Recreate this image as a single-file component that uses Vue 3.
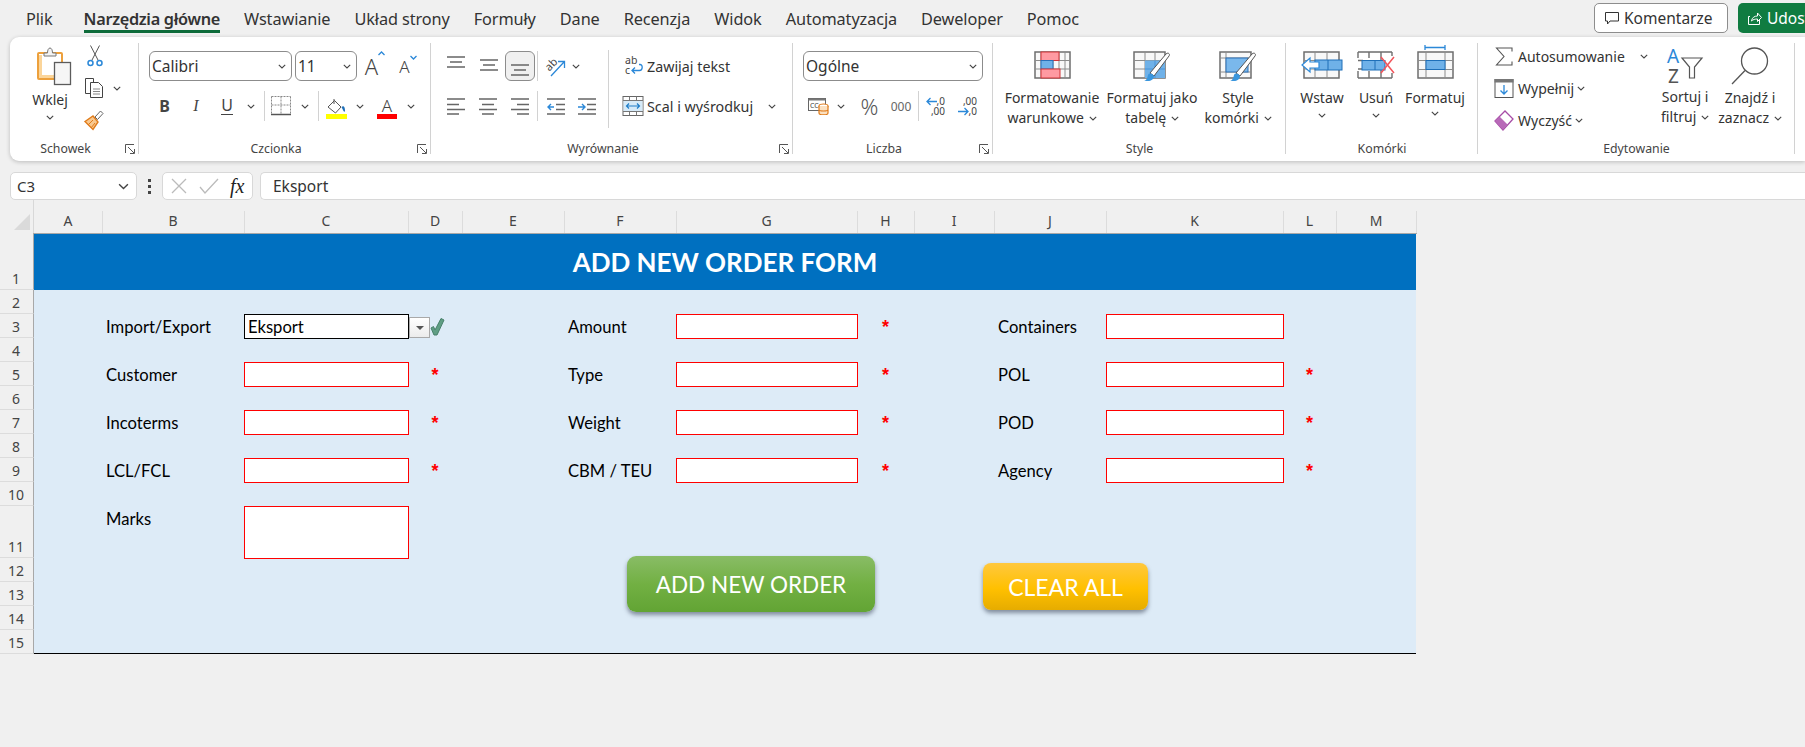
<template>
  <div class="app">
    <svg class="sprite" width="0" height="0">
      <symbol id="chev" viewBox="0 0 8 5"><path d="M.8 .8 4 4 7.2 .8" fill="none" stroke="#444" stroke-width="1.1" /></symbol>
      <symbol id="launch" viewBox="0 0 10 10"><path d="M.5 9V.5H9M3 3l6 6M9.5 5v4.500H5" fill="none" stroke="#555" stroke-width="1" /></symbol>
    </svg>

    <header class="tabs">
      <nav class="tab-list">
        <span v-for="t in tabs" :key="t" class="tab" :class="{ active: t === 'Narzędzia główne' }">{{ t }}</span>
      </nav>
      <div class="tab-actions">
        <button class="comment-btn">
          <svg width="16" height="16" viewBox="0 0 16 16"><path d="M1.500 2.500h13v8.500H6L3.500 14v-3h-2z" fill="none" stroke="#333" /></svg>
          Komentarze
        </button>
        <button class="share-btn">
          <svg width="16" height="16" viewBox="0 0 16 16"><path d="M3 6.500H1.500v8h11V10M4.500 11c.5-3.500 3-5 6-5V3l4 4.500-4 4V9c-2.500 0-4.500.5-6 2z" fill="none" stroke="#fff" /></svg>
          Udostępnij
        </button>
      </div>
    </header>

    <section class="ribbon">
      <!-- Schowek -->
      <div class="group g-clip">
        <div class="body">
          <div class="big paste">
            <svg width="35" height="38" viewBox="0 0 35 38">
              <rect x="1" y="6" width="24" height="26" rx="1" fill="#fff" stroke="#eda03c" stroke-width="2" />
              <path d="M2 28h16v3H2zM2 8h3v20H2z" fill="#fbd59a" />
              <path d="M7 9V6h3.500C10.500 3 11.500 1 13 1s2.500 2 2.500 5H19v3z" fill="#f4f4f4" stroke="#777" />
              <rect x="17.500" y="15.500" width="16" height="22" fill="#f6f6f6" stroke="#5c5c5c" stroke-width="1.300" />
            </svg>
            <span class="lbl">Wklej</span>
            <svg class="chev"><use href="#chev" /></svg>
          </div>
          <div class="clip-col">
            <svg class="clip-icon" width="16" height="22" viewBox="0 0 16 22">
              <path d="M3.500 .5 11 15M12.500 .5 5 15" stroke="#555" fill="none" />
              <circle cx="3.500" cy="18" r="2.500" fill="none" stroke="#2b88d8" stroke-width="1.500" />
              <circle cx="12.500" cy="18" r="2.500" fill="none" stroke="#2b88d8" stroke-width="1.500" />
            </svg>
            <div class="clip-row">
              <svg width="20" height="20" viewBox="0 0 20 20">
                <path d="M6.500 15.500h-5V.5h8V5" fill="#fff" stroke="#444" />
                <path d="M6.500 4.500h8l4 4v11h-12z" fill="#fff" stroke="#444" />
                <path d="M9 11h7M9 13.500h7M9 16h7" stroke="#888" />
              </svg>
              <svg class="chev"><use href="#chev" /></svg>
            </div>
            <svg class="clip-icon" width="20" height="20" viewBox="0 0 20 20">
              <path d="M1 11.500 9 6l5 6-5 7.500z" fill="#f9c88e" stroke="#e07b1a" stroke-width="1.400" />
              <path d="M4 15l5-5M7 18l4-5" stroke="#e07b1a" />
              <path d="M11 7l5.500-6 2.500 2.500-5.500 6z" fill="#fff" stroke="#666" />
            </svg>
          </div>
        </div>
        <div class="g-label has-launch">Schowek</div>
        <svg class="launcher"><use href="#launch" /></svg>
      </div>

      <!-- Czcionka -->
      <div class="group g-font">
        <div class="body rows">
          <div class="row font-top">
            <div class="select font-name">Calibri<svg class="chev"><use href="#chev" /></svg></div>
            <div class="select font-size">11<svg class="chev"><use href="#chev" /></svg></div>
            <span class="size-a big-a">A<svg width="7" height="5" viewBox="0 0 7 5"><path d="M.5 4 3.500 1 6.500 4" fill="none" stroke="#2b88d8" stroke-width="1.300" /></svg></span>
            <span class="size-a small-a">A<svg width="7" height="5" viewBox="0 0 7 5"><path d="M.5 1 3.500 4 6.500 1" fill="none" stroke="#2b88d8" stroke-width="1.300" /></svg></span>
          </div>
          <div class="row font-bot">
            <b class="fmt">B</b>
            <i class="fmt serif-i">I</i>
            <span class="fmt under">U</span>
            <svg class="chev"><use href="#chev" /></svg>
            <span class="vsep"></span>
            <svg width="20" height="20" viewBox="0 0 20 20">
              <path d="M.5 .5h19M.5 .5v17M19.500 .5v17M10 .5v17M.5 9h19" stroke="#888" stroke-dasharray="2 1" fill="none" />
              <path d="M0 18.500h20" stroke="#555" stroke-width="1.500" />
            </svg>
            <svg class="chev"><use href="#chev" /></svg>
            <span class="vsep"></span>
            <svg class="fill-svg" width="21" height="22" viewBox="0 0 21 22">
              <path d="M2 9 8.500 2.500 15 9l-5.500 6z" fill="#fff" stroke="#555" />
              <path d="M8 1v5" stroke="#555" />
              <path d="M15.500 9c2-2 3.500-.5 3.500 4 0 1-1 1-1.500 0z" fill="#1e6fb8" />
              <rect x="0" y="16" width="21" height="5" fill="#ff0" />
            </svg>
            <svg class="chev"><use href="#chev" /></svg>
            <span class="color-a">A</span>
            <svg class="chev"><use href="#chev" /></svg>
          </div>
        </div>
        <div class="g-label has-launch">Czcionka</div>
        <svg class="launcher"><use href="#launch" /></svg>
      </div>

      <!-- Wyrównanie -->
      <div class="group g-align">
        <div class="body align-body">
          <div class="rows align-left">
            <div class="row al-top">
              <svg class="al" viewBox="0 0 18 24"><path d="M0 3h18M3 8h12M0 13h18" /></svg>
              <svg class="al" viewBox="0 0 18 24"><path d="M0 6h18M3 11h12M0 16h18" /></svg>
              <span class="al-active"><svg class="al" viewBox="0 0 18 24"><path d="M0 11h18M3 16h12M0 21h18" /></svg></span>
              <span class="vsep"></span>
              <svg class="open-svg" width="21" height="21" viewBox="0 0 21 21">
                <text x="1" y="12" transform="rotate(-45 7 10)" font-size="11" fill="#444" font-family="Noto Sans, sans-serif">ab</text>
                <path d="M6 20 19 6M13 5.500h6.500V12" fill="none" stroke="#2b88d8" stroke-width="1.300" />
              </svg>
              <svg class="chev"><use href="#chev" /></svg>
            </div>
            <div class="row al-bot">
              <svg class="al" viewBox="0 0 18 18"><path d="M0 2h18M0 7.500h12M0 12.500h18M0 17h12" /></svg>
              <svg class="al" viewBox="0 0 18 18"><path d="M0 2h18M3 7.500h12M0 12.500h18M3 17h12" /></svg>
              <svg class="al" viewBox="0 0 18 18"><path d="M0 2h18M6 7.500h12M0 12.500h18M6 17h12" /></svg>
              <span class="vsep"></span>
              <svg class="al" viewBox="0 0 18 18">
                <path d="M0 2h18M9 7.500h9M9 12.500h9M0 17h18" />
                <path d="M7 10H1M4 7l-3 3 3 3" style="stroke:#2b88d8" />
              </svg>
              <svg class="al" viewBox="0 0 18 18">
                <path d="M0 2h18M9 7.500h9M9 12.500h9M0 17h18" />
                <path d="M0 10h6M4 7l3 3-3 3" style="stroke:#2b88d8" />
              </svg>
            </div>
          </div>
          <div class="rows align-right">
            <div class="row wide-row">
              <svg class="wide-icon" width="20" height="22" viewBox="0 0 20 22">
                <text x="2" y="9" font-size="10.500" fill="#444" font-family="Noto Sans, sans-serif">ab</text>
                <text x="2" y="19" font-size="10.500" fill="#444" font-family="Noto Sans, sans-serif">c</text>
                <path d="M16 9.500h1c3 0 3 6-.5 6H9M12 12.500l-3 3 3 3" fill="none" stroke="#2b88d8" stroke-width="1.300" />
              </svg>
              <span>Zawijaj tekst</span>
            </div>
            <div class="row wide-row">
              <svg class="wide-icon" width="21" height="20" viewBox="0 0 21 20">
                <rect x=".5" y=".5" width="20" height="19" fill="#fff" stroke="#666" />
                <path d="M.5 4.500h20M.5 15.500h20M7 .5v4M14 .5v4M7 15.500v4M14 15.500v4" stroke="#777" />
                <rect x="1" y="5" width="19" height="10" fill="#d6eaf8" />
                <path d="M4 10h13M6.500 7.500 4 10l2.500 2.500M14.500 7.500 17 10l-2.500 2.500" fill="none" stroke="#1e7dc8" stroke-width="1.200" />
              </svg>
              <span>Scal i wyśrodkuj</span>
              <svg class="chev merge-chev"><use href="#chev" /></svg>
            </div>
          </div>
        </div>
        <div class="g-label has-launch">Wyrównanie</div>
        <svg class="launcher"><use href="#launch" /></svg>
      </div>

      <!-- Liczba -->
      <div class="group g-num">
        <div class="body rows">
          <div class="row"><div class="select num-format">Ogólne<svg class="chev"><use href="#chev" /></svg></div></div>
          <div class="row num-bot">
            <svg width="21" height="17" viewBox="0 0 21 17">
              <rect x=".5" y=".5" width="17" height="12" fill="#fff" stroke="#666" />
              <path d="M.5 .5h17v2H.5z" fill="#777" />
              <text x="2" y="10" font-size="7" fill="#444" font-family="Noto Sans, sans-serif">CC</text>
              <ellipse cx="15.500" cy="8" rx="4.500" ry="2" fill="#fff" stroke="#e07b1a" stroke-width="1.200" />
              <path d="M11 8v7c0 2.500 9 2.500 9 0V8M11 11.500c0 2 9 2 9 0" fill="#fbe0c0" stroke="#e07b1a" stroke-width="1.200" />
            </svg>
            <svg class="chev"><use href="#chev" /></svg>
            <span class="pct">%</span>
            <span class="thou">000</span>
            <span class="vsep"></span>
            <div class="dec">
              <span class="dec-a"><svg width="11" height="9" viewBox="0 0 11 9"><path d="M11 4.500H1M4.500 1 1 4.500 4.500 8" fill="none" stroke="#2b88d8" stroke-width="1.300" /></svg><em>,0</em></span>
              <span class="dec-b">,00</span>
            </div>
            <div class="dec">
              <span class="dec-c">,00</span>
              <span class="dec-a"><svg width="11" height="9" viewBox="0 0 11 9"><path d="M0 4.500h10M6.500 1 10 4.500 6.500 8" fill="none" stroke="#2b88d8" stroke-width="1.300" /></svg><em>,0</em></span>
            </div>
          </div>
        </div>
        <div class="g-label has-launch">Liczba</div>
        <svg class="launcher"><use href="#launch" /></svg>
      </div>

      <!-- Style -->
      <div class="group g-style">
        <div class="body">
          <div class="big tall w118">
            <svg width="37" height="28" viewBox="0 0 37 28">
              <path d="M1 1h35v26H1z" fill="#f8f8f8" stroke="#6e6e6e" stroke-width="1.500" />
              <path d="M7 1v26M19 1v26M25 1v26M31 1v26M1 9.500h35M1 18h35" stroke="#8c8c8c" />
              <rect x="7" y="1" width="18" height="8.500" fill="#ff9aa2" stroke="#d13438" />
              <rect x="7" y="9.500" width="12" height="8.500" fill="#6fb1e8" stroke="#2a70b8" />
              <rect x="7" y="18" width="19" height="9" fill="#ff9aa2" stroke="#d13438" />
            </svg>
            <span class="lbl">Formatowanie</span>
            <span class="lbl">warunkowe <svg class="chev"><use href="#chev" /></svg></span>
          </div>
          <div class="big tall w82">
            <svg class="brush" width="38" height="31" viewBox="0 0 38 31">
              <path d="M1 1h31v26H1z" fill="#f8f8f8" stroke="#6e6e6e" stroke-width="1.500" />
              <path d="M12 1v26M22 1v26M1 9.500h31M1 18h31" stroke="#8c8c8c" />
              <rect x="12" y="9.500" width="20" height="17.500" fill="#6fb1e8" />
              <path d="M22 9.500v17.500M12 18h20" stroke="#4a93d8" />
              <path d="M17 22 33 3c2-2 4.500 0 3 2L21 25z" fill="#fff" stroke="#555" />
              <path d="M10 30c3 0 4-2 5-6 1-2 4-2 6 1 0 3-3 5-6 5z" fill="#3a96dd" />
            </svg>
            <span class="lbl">Formatuj jako</span>
            <span class="lbl">tabelę <svg class="chev"><use href="#chev" /></svg></span>
          </div>
          <div class="big tall w90">
            <svg class="brush" width="38" height="31" viewBox="0 0 38 31">
              <path d="M1 1h31v26H1z" fill="#f8f8f8" stroke="#6e6e6e" stroke-width="1.500" />
              <path d="M7 1v26M1 7h31M1 21h31" stroke="#8c8c8c" />
              <rect x="7" y="7" width="22" height="14" fill="#7ab8ec" stroke="#2a70b8" />
              <path d="M17 22 33 3c2-2 4.500 0 3 2L21 25z" fill="#fff" stroke="#555" />
              <path d="M10 30c3 0 4-2 5-6 1-2 4-2 6 1 0 3-3 5-6 5z" fill="#3a96dd" />
            </svg>
            <span class="lbl">Style</span>
            <span class="lbl">komórki <svg class="chev"><use href="#chev" /></svg></span>
          </div>
        </div>
        <div class="g-label">Style</div>
      </div>

      <!-- Komórki -->
      <div class="group g-cells">
        <div class="body">
          <div class="big tall w72">
            <svg width="42" height="28" viewBox="0 0 42 28">
              <path d="M3 1h35v26H3z" fill="#f8f8f8" stroke="#6e6e6e" stroke-width="1.500" />
              <path d="M14 1v26M26 1v26M3 9.500h35M3 18h35" stroke="#8c8c8c" />
              <rect x="14" y="9" width="27" height="10" fill="#6fb1e8" stroke="#1e6fb8" />
              <path d="M27 9v10" stroke="#1e6fb8" />
              <path d="M1 14 9 7v4h9v6H9v4z" fill="#fff" stroke="#2b88d8" stroke-width="1.200" />
            </svg>
            <span class="lbl low">Wstaw</span>
            <svg class="chev cell-chev"><use href="#chev" /></svg>
          </div>
          <div class="big tall w36">
            <svg width="38" height="28" viewBox="0 0 38 28">
              <path d="M1 1h34M1 27h34M1 1v6M1 20v7M12 1v6M12 20v7M24 1v26M35 1v4M35 22v5M1 9.500h5M1 18h5" fill="none" stroke="#6e6e6e" stroke-width="1.400" />
              <rect x="5" y="9.500" width="23" height="9.500" fill="#6fb1e8" stroke="#1e6fb8" />
              <path d="M18 9.500V19" stroke="#1e6fb8" />
              <path d="M24 6l13 16M37 6 24 22" stroke="#f2545b" stroke-width="1.500" />
            </svg>
            <span class="lbl low">Usuń</span>
            <svg class="chev cell-chev"><use href="#chev" /></svg>
          </div>
          <div class="big tall w82 fmt-cell">
            <svg width="37" height="34" viewBox="0 0 37 34">
              <path d="M8 2.500h20M8 0v5M28 0v5" stroke="#2b88d8" stroke-width="1.300" fill="none" />
              <path d="M1 7h35v26H1z" fill="#f8f8f8" stroke="#6e6e6e" stroke-width="1.500" />
              <path d="M9 7v26M28 7v26M1 15.500h35M1 24.500h35" stroke="#8c8c8c" />
              <rect x="9" y="15.500" width="19" height="9" fill="#6fb1e8" stroke="#1e6fb8" />
            </svg>
            <span class="lbl">Formatuj</span>
            <svg class="chev fmt-chev"><use href="#chev" /></svg>
          </div>
        </div>
        <div class="g-label">Komórki</div>
      </div>

      <!-- Edytowanie -->
      <div class="group g-edit">
        <div class="body">
          <div class="edit-list">
            <div class="edit-row">
              <svg width="18" height="19" viewBox="0 0 18 19"><path d="M17 4.500V1H1.500L9 9.500 1.500 18H17v-3.500" fill="none" stroke="#555" stroke-width="1.100" /></svg>
              <span>Autosumowanie</span>
              <svg class="chev sum-chev"><use href="#chev" /></svg>
            </div>
            <div class="edit-row">
              <svg width="19" height="19" viewBox="0 0 19 19">
                <rect x=".5" y=".5" width="18" height="18" fill="#fff" stroke="#555" />
                <path d="M0 0h19v3.500H0z" fill="#777" />
                <path d="M9.500 6v9M6 11.500l3.500 3.500 3.500-3.500" fill="none" stroke="#2b88d8" stroke-width="1.300" />
              </svg>
              <span>Wypełnij</span>
              <svg class="chev"><use href="#chev" /></svg>
            </div>
            <div class="edit-row">
              <svg width="20" height="21" viewBox="0 0 20 21">
                <path d="M1 11 11 1l8 8L9 20z" fill="#fff" stroke="#a64ca6" stroke-width="1.300" />
                <path d="M1 11l4.500-4.500 8 8L9 20z" fill="#b869b8" />
              </svg>
              <span>Wyczyść</span>
              <svg class="chev"><use href="#chev" /></svg>
            </div>
          </div>
          <div class="big w54 short">
            <svg width="38" height="37" viewBox="0 0 38 37">
              <text x="1" y="16" font-size="19" fill="#2b88d8" font-family="Noto Sans, sans-serif">A</text>
              <text x="2" y="36" font-size="19" fill="#555" font-family="Noto Sans, sans-serif">Z</text>
              <path d="M16 11h20l-7.500 9v11h-5V20z" fill="#fff" stroke="#555" stroke-width="1.200" />
            </svg>
            <span class="lbl">Sortuj i</span>
            <span class="lbl">filtruj <svg class="chev"><use href="#chev" /></svg></span>
          </div>
          <div class="big w76 short">
            <svg width="38" height="38" viewBox="0 0 38 38">
              <circle cx="23.500" cy="14" r="13" fill="#fff" stroke="#555" stroke-width="1.300" />
              <path d="M14 23.500 1 37" stroke="#555" stroke-width="1.300" />
            </svg>
            <span class="lbl">Znajdź i</span>
            <span class="lbl">zaznacz <svg class="chev"><use href="#chev" /></svg></span>
          </div>
        </div>
        <div class="g-label">Edytowanie</div>
      </div>
    </section>

    <section class="formula">
      <div class="name-box">C3<svg class="name-chev" viewBox="0 0 8 5"><path d="M.8 .8 4 4 7.200 .8" fill="none" stroke="#444" /></svg></div>
      <span class="dots"><i></i><i></i><i></i></span>
      <div class="fx-box">
        <svg width="16" height="16" viewBox="0 0 16 16"><path d="M1 1l14 14M15 1 1 15" stroke="#bbb" stroke-width="1.300" /></svg>
        <svg width="20" height="16" viewBox="0 0 20 16"><path d="M1 9l5 6L19 1" fill="none" stroke="#bbb" stroke-width="1.300" /></svg>
        <span class="fx">fx</span>
      </div>
      <div class="formula-input">Eksport</div>
    </section>

    <section class="sheet">
      <div class="corner"><span></span></div>
      <div v-for="c in colLetters" :key="c" class="col-head">{{ c }}</div>
      <div v-for="r in 15" :key="r" class="row-head" :style="{ gridRow: r + 1 }">{{ r }}</div>

      <div class="fill-area"></div>
      <div class="title-band">ADD NEW ORDER FORM</div>

      <template v-for="f in fields" :key="f.label">
        <div class="f-label" :style="{ gridColumn: f.col, gridRow: f.row + 1 }">{{ f.label }}</div>
        <div class="f-box" :class="{ selected: f.value }" :style="{ gridColumn: f.col + 1, gridRow: f.row + 1 }">{{ f.value }}</div>
        <div v-if="f.star" class="f-star" :style="{ gridColumn: f.col + 2, gridRow: f.row + 1 }">*</div>
      </template>

      <div class="f-drop">
        <span class="drop-btn"></span>
        <svg width="15" height="19" viewBox="0 0 15 19"><path d="M1 11l2.500-1.500L5 13 11 1.500l3 1.500-7 15H4z" fill="#5f9e84" stroke="#47806a" /></svg>
      </div>

      <button class="shape-btn add-btn">ADD NEW ORDER</button>
      <button class="shape-btn clear-btn">CLEAR ALL</button>
    </section>
  </div>
</template>

<script setup>
const tabs = ['Plik', 'Narzędzia główne', 'Wstawianie', 'Układ strony', 'Formuły', 'Dane', 'Recenzja', 'Widok', 'Automatyzacja', 'Deweloper', 'Pomoc']
const colLetters = 'ABCDEFGHIJKLM'.split('')

// col is the 1-based grid column of the label (the row header takes column 1)
const fields = [
  { label: 'Import/Export', col: 3, row: 3, value: 'Eksport' },
  { label: 'Customer', col: 3, row: 5, star: true },
  { label: 'Incoterms', col: 3, row: 7, star: true },
  { label: 'LCL/FCL', col: 3, row: 9, star: true },
  { label: 'Marks', col: 3, row: 11 },
  { label: 'Amount', col: 7, row: 3, star: true },
  { label: 'Type', col: 7, row: 5, star: true },
  { label: 'Weight', col: 7, row: 7, star: true },
  { label: 'CBM / TEU', col: 7, row: 9, star: true },
  { label: 'Containers', col: 11, row: 3 },
  { label: 'POL', col: 11, row: 5, star: true },
  { label: 'POD', col: 11, row: 7, star: true },
  { label: 'Agency', col: 11, row: 9, star: true }
]
</script>

<style>
html, body {
  margin: 0;
  height: 100%;
  overflow: hidden;
  background: #f0f0f0;
}
</style>

<style scoped>
.app {
  width: 1805px;
  height: 747px;
  overflow: hidden;
  background: #f0f0f0;
  font-family: "Noto Sans", sans-serif;
  color: #333;
}
.sprite { position: absolute; }
.chev { width: 8px; height: 5px; flex: none; }

/* tabs */
.tabs {
  height: 37px;
  display: flex;
  justify-content: space-between;
  box-sizing: border-box;
}
.tab-list { display: flex; gap: 24px; padding-left: 26px; }
.tab { height: 33px; line-height: 38px; font-size: 16.300px; letter-spacing: -.1px; white-space: nowrap; box-sizing: border-box; }
.tab:first-child { margin-right: 7px; }
.tab.active { font-weight: 600; border-bottom: 3px solid #0e6b3a; color: #333; letter-spacing: -.3px; }
.tab-actions { display: flex; gap: 10px; padding-top: 3px; width: 211px; flex: none; }
.comment-btn, .share-btn {
  height: 30px;
  border-radius: 5px;
  font: 15.500px "Noto Sans", sans-serif;
  display: flex;
  align-items: center;
  gap: 4px;
  padding: 0 0 0 9px;
  box-sizing: border-box;
  white-space: nowrap;
  flex: none;
}
.comment-btn { width: 134px; background: #fff; border: 1px solid #8d8d8d; color: #333; }
.share-btn { width: 120px; background: #107c41; border: 0; color: #fff; }

/* ribbon */
.ribbon {
  height: 124px;
  margin-left: 10px;
  display: flex;
  background: #fff;
  border-radius: 9px 0 0 9px;
  box-shadow: 0 1px 4px rgba(0, 0, 0, .22);
  font-size: 14px;
}
.group { position: relative; display: flex; flex-direction: column; flex: none; }
.group::after {
  content: "";
  position: absolute;
  right: 0;
  top: 6px;
  bottom: 7px;
  width: 1px;
  background: #d2d2d2;
}
.g-clip { width: 129px; }
.g-font { width: 292px; }
.g-align { width: 362px; }
.g-num { width: 200px; }
.g-style { width: 293px; }
.g-cells { width: 192px; }
.g-edit { width: 317px; }
.body { flex: 1; display: flex; min-height: 0; }
.g-label { height: 16px; line-height: 16px; margin-bottom: 4px; font-size: 12.300px; text-align: center; color: #444; }
.g-label.has-launch { padding-right: 18px; }
.launcher { position: absolute; right: 4px; bottom: 7px; width: 10px; height: 10px; }
.rows { display: flex; flex-direction: column; gap: 10px; padding-top: 14px; box-sizing: border-box; }
.row { height: 30px; display: flex; align-items: center; }
.vsep { width: 1px; height: 30px; background: #d2d2d2; justify-self: center; }
.select {
  height: 30px;
  box-sizing: border-box;
  border: 1px solid #8c8c8c;
  border-radius: 6px;
  display: flex;
  align-items: center;
  justify-content: space-between;
  padding: 0 5px 0 2px;
  font-size: 15.500px;
  color: #333;
}

.big { display: flex; flex-direction: column; align-items: center; flex: none; padding-top: 10px; box-sizing: border-box; }
.big.tall { padding-top: 14px; }
.lbl { height: 20px; line-height: 20px; white-space: nowrap; font-size: 14px; display: block; }
.big > svg:first-child { margin-bottom: 1px; flex: none; overflow: visible; }
.big > .lbl:nth-child(2) { margin-top: 4px; }
.big.tall > svg:first-child { margin-bottom: 5px; }
.big.tall > svg.brush { margin-bottom: 2px; }
.big.tall.fmt-cell > svg:first-child { margin-top: -6px; }
.big.short > svg:first-child { margin-bottom: -1px; }
.lbl .chev { margin-left: 1px; vertical-align: 2px; }
.w118 { width: 118px; }
.w82 { width: 82px; }
.w90 { width: 90px; }
.w72 { width: 72px; }
.w36 { width: 36px; }
.w54 { width: 54px; }
.w76 { width: 76px; }

/* schowek */
.paste { width: 80px; }
.big.paste > svg:first-child { margin-left: 9px; }
.paste .chev { margin-top: 5px; }
.clip-col { display: flex; flex-direction: column; align-items: flex-start; margin: 3px 0 0 -6px; }
.clip-row { height: 32px; display: flex; align-items: center; gap: 9px; }
.clip-icon { height: 22px; margin: 5px 0; }
.clip-col > .clip-icon:first-child { margin-left: 3px; }

/* czcionka */
.g-font .rows { padding-left: 10px; }
.font-name { width: 143px; margin-right: 3px; }
.font-size { width: 62px; }
.size-a { display: flex; align-items: flex-start; font-size: 19px; color: #444; justify-content: center; }
.big-a { width: 36px; font-size: 22px; font-weight: 300; }
.small-a { width: 30px; font-size: 17px; font-weight: 300; }
.font-bot {
  display: grid;
  grid-template-columns: 31px 32px 30px 18px 8px 26px 22px 4px 32px 16px 38px 10px;
  justify-items: center;
  align-items: center;
}
.fmt { font-size: 16px; color: #444; line-height: 20px; }
.serif-i { font-family: "Liberation Serif", serif; font-size: 16px; }
.under { border-bottom: 1px solid #444; line-height: 17px; }
.fill-svg { margin-top: 6px; }
.color-a {
  font-size: 17px;
  line-height: 16px;
  width: 20px;
  text-align: center;
  border-bottom: 5px solid #f00;
  margin-top: 4px;
  color: #444;
  font-weight: 300;
}

/* wyrownanie */
.align-body { display: flex; }
.align-left { width: 178px; padding-left: 9px; flex: none; position: relative; }
.align-left::after {
  content: "";
  position: absolute;
  right: 0;
  top: 13px;
  height: 78px;
  width: 1px;
  background: #d2d2d2;
}
.al { width: 18px; height: 24px; fill: none; stroke: #666; stroke-width: 1.400; }
.open-svg { overflow: visible; }
.al-top { display: grid; grid-template-columns: 32px 33px 30px 4px 32px 10px; justify-items: center; }
.al-bot { display: grid; grid-template-columns: 32px 32px 32px 2px 35px 28px; justify-items: center; }
.al-bot .al { height: 18px; }
.al-active {
  width: 30px;
  height: 30px;
  box-sizing: border-box;
  border: 1px solid #8c8c8c;
  border-radius: 6px;
  background: #f0f0f0;
  display: flex;
  align-items: center;
  justify-content: center;
}
.align-right { padding-left: 13px; }
.wide-row { font-size: 14.300px; white-space: nowrap; }
.wide-icon { width: 22px; margin-right: 3px; flex: none; overflow: visible; }
.merge-chev { margin-left: 15px; }

/* liczba */
.g-num .rows { padding-left: 10px; }
.num-format { width: 180px; }
.num-bot {
  display: grid;
  grid-template-columns: 31px 14px 43px 20px 14px 20px 12px 20px;
  justify-items: center;
}
.num-bot > .dec:last-child { grid-column: 8; }
.pct { font-size: 22px; color: #555; font-weight: 300; }
.thou { font-size: 12px; color: #666; }
.dec { display: flex; flex-direction: column; font-size: 10px; line-height: 10px; color: #444; align-items: flex-end; width: 20px; }
.dec-a { display: flex; align-items: center; }
.dec-a em { font-style: normal; }

/* komorki */
.low { margin-top: 2px; }
.cell-chev { margin-top: 5px; }
.fmt-chev { margin-top: 3px; }

/* edytowanie */
.edit-list { width: 180px; padding: 3px 0 0 15px; box-sizing: border-box; flex: none; }
.edit-row { height: 32px; display: flex; align-items: center; font-size: 14px; white-space: nowrap; }
.edit-row > svg:first-child { width: 22px; margin-right: 3px; flex: none; }
.edit-row .chev { margin-left: 3px; }
.edit-row .sum-chev { margin-left: 15px; }

/* formula bar */
.formula {
  height: 28px;
  margin-top: 11px;
  display: flex;
  align-items: stretch;
  font-size: 15px;
}
.name-box, .fx-box, .formula-input {
  background: #fff;
  border: 1px solid #d8d8d8;
  border-radius: 5px;
  box-sizing: border-box;
  display: flex;
  align-items: center;
}
.name-box { margin-left: 10px; width: 127px; padding: 0 7px 0 6px; justify-content: space-between; }
.name-chev { width: 11px; height: 7px; }
.dots { width: 25px; display: flex; flex-direction: column; align-items: center; justify-content: center; gap: 3px; }
.dots i { width: 3px; height: 3px; background: #444; display: block; }
.fx-box { width: 91px; padding-left: 8px; gap: 12px; }
.fx { font: italic 400 20px "Liberation Serif", serif; color: #222; margin-left: -1px; }
.formula-input { margin-left: 7px; flex: 1; padding-left: 12px; border-right: 0; border-radius: 5px 0 0 5px; font-size: 15.500px; }

/* sheet */
.sheet {
  position: relative;
  display: grid;
  grid-template-columns: 34px 68px 142px 164px 54px 102px 112px 181px 57px 80px 112px 177px 53px 80px;
  grid-template-rows: 33px 57px repeat(9, 24px) 52px repeat(4, 24px);
  font-family: Lato, sans-serif;
}
.corner { grid-column: 1; grid-row: 1; position: relative; border-right: 1px solid #d8d8d8; }
.corner span {
  position: absolute;
  right: 3px;
  bottom: 3px;
  border-style: solid;
  border-width: 0 0 16px 16px;
  border-color: transparent transparent #dadada transparent;
}
.col-head {
  grid-row: 1;
  height: 22px;
  align-self: end;
  text-align: center;
  font: 14px/20px "Noto Sans", sans-serif;
  color: #444;
  box-sizing: border-box;
  border-right: 1px solid #dcdcdc;
  margin-right: -1px;
  position: relative;
  z-index: 2;
  box-shadow: 0 1px 0 #a8a8a8;
}
.row-head {
  grid-column: 1;
  display: flex;
  align-items: flex-end;
  justify-content: center;
  padding-right: 1px;
  box-sizing: border-box;
  font: 14px/20px "Noto Sans", sans-serif;
  color: #444;
  border-right: 1px solid #a8a8a8;
  border-bottom: 1px solid #dcdcdc;
}
.fill-area { grid-column: 2 / -1; grid-row: 3 / -1; background: #ddebf7; border-bottom: 1px solid #000; }
.title-band {
  grid-column: 2 / -1;
  grid-row: 2;
  background: #0070c0;
  color: #fff;
  font-weight: 700;
  font-size: 26px;
  display: flex;
  align-items: center;
  justify-content: center;
}
.f-label { font-size: 16.600px; line-height: 24px; padding: 1px 0 0 4px; color: #000; white-space: nowrap; z-index: 1; position: relative; }
.f-box { background: #fff; border: 1px solid #f00; box-sizing: border-box; font-size: 16.600px; line-height: 24px; padding-left: 3px; color: #000; margin: 0 -1px -1px 0; z-index: 1; position: relative; }
.f-box.selected { border-color: #000; }
.f-star { text-align: center; color: #f00; font: 700 18px/26px "Liberation Sans", sans-serif; z-index: 1; position: relative; }
.f-drop {
  grid-column: 6;
  grid-row: 4;
  z-index: 2;
  position: relative;
  display: flex;
  align-items: center;
  margin-top: 2px;
}
.f-drop svg { margin-top: -2px; }
.drop-btn {
  width: 21px;
  height: 21px;
  box-sizing: border-box;
  border: 1px solid #a9a9a9;
  background: linear-gradient(#fff, #ececec);
  position: relative;
  margin-left: -53px;
  flex: none;
}
.drop-btn::after {
  content: "";
  position: absolute;
  left: 6px;
  top: 8px;
  border-style: solid;
  border-width: 4px 4px 0 4px;
  border-color: #555 transparent transparent transparent;
}
.shape-btn {
  position: absolute;
  z-index: 3;
  border: 0;
  color: #fff;
  font-family: Lato, sans-serif;
  box-shadow: 0 3px 4px rgba(40, 50, 70, .5);
}
.add-btn {
  left: 627px;
  top: 356px;
  width: 248px;
  height: 56px;
  border-radius: 9px;
  font-size: 22.500px;
  background: linear-gradient(#89bc66, #72b043 50%, #62a434);
}
.clear-btn {
  left: 983px;
  top: 363px;
  width: 165px;
  height: 47px;
  border-radius: 8px;
  font-size: 23px;
  background: linear-gradient(#ffc83e, #ffc000 55%, #e6ac00);
}
</style>
